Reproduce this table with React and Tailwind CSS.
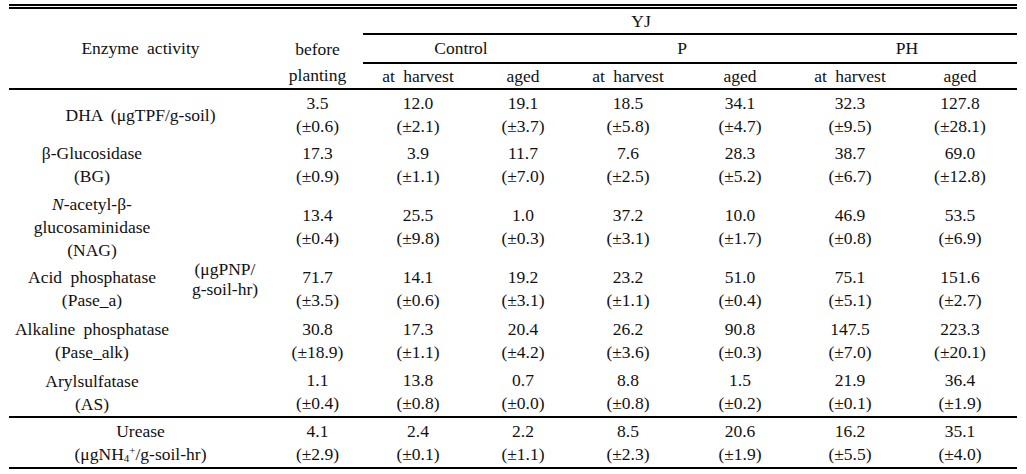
import React from "react";

const COLS = "grid-cols-[166px_97px_91px_110px_100px_110px_114px_106px_114px]";

const rows = [
  { key: "DHA", vals: [["3.5","±0.6"],["12.0","±2.1"],["19.1","±3.7"],["18.5","±5.8"],["34.1","±4.7"],["32.3","±9.5"],["127.8","±28.1"]] },
  { key: "BG", vals: [["17.3","±0.9"],["3.9","±1.1"],["11.7","±7.0"],["7.6","±2.5"],["28.3","±5.2"],["38.7","±6.7"],["69.0","±12.8"]] },
  { key: "NAG", vals: [["13.4","±0.4"],["25.5","±9.8"],["1.0","±0.3"],["37.2","±3.1"],["10.0","±1.7"],["46.9","±0.8"],["53.5","±6.9"]] },
  { key: "ACID", vals: [["71.7","±3.5"],["14.1","±0.6"],["19.2","±3.1"],["23.2","±1.1"],["51.0","±0.4"],["75.1","±5.1"],["151.6","±2.7"]] },
  { key: "ALK", vals: [["30.8","±18.9"],["17.3","±1.1"],["20.4","±4.2"],["26.2","±3.6"],["90.8","±0.3"],["147.5","±7.0"],["223.3","±20.1"]] },
  { key: "AS", vals: [["1.1","±0.4"],["13.8","±0.8"],["0.7","±0.0"],["8.8","±0.8"],["1.5","±0.2"],["21.9","±0.1"],["36.4","±1.9"]] },
];
const urease = [["4.1","±2.9"],["2.4","±0.1"],["2.2","±1.1"],["8.5","±2.3"],["20.6","±1.9"],["16.2","±5.5"],["35.1","±4.0"]];

function Val({ v }) {
  return (
    <div className="flex flex-col items-center justify-center leading-[23px]">
      <span>{v[0]}</span>
      <span>({v[1]})</span>
    </div>
  );
}

function Label({ children, className = "" }) {
  return (
    <div className={"flex flex-col items-center justify-center text-center leading-[23px] " + className}>
      {children}
    </div>
  );
}

export default function App() {
  return (
    <div className="w-[1026px] h-[474px] bg-white text-[#111] [font-family:'Liberation_Serif','Times_New_Roman',serif] text-[17.5px] [word-spacing:4px] pt-[4px] pl-[9px]">
      <div className="w-[1008px]">
        <div className="h-[2px] bg-black" />
        <div className="h-[1px]" />
        <div className="h-[1.5px] bg-black" />
        {/* Header */}
        <div className={"grid " + COLS + " grid-rows-[26px_29px_24px] pt-[0.5px]"}>
          <div className="col-span-2 row-span-3 flex items-center justify-center">Enzyme activity</div>
          <div className="row-span-3 flex flex-col items-center justify-end leading-[26px]">
            <span>before</span>
            <span>planting</span>
          </div>
          <div className="col-span-6 border-b-2 border-black flex items-center justify-center pr-[98px]">YJ</div>
          <div className="col-span-2 border-b-2 border-black flex items-center justify-center pr-[14px]">Control</div>
          <div className="col-span-2 border-b-2 border-black flex items-center justify-center pr-[6px]">P</div>
          <div className="col-span-2 border-b-2 border-black flex items-center justify-center">PH</div>
          <div className="flex items-center justify-center">at harvest</div>
          <div className="flex items-center justify-center">aged</div>
          <div className="flex items-center justify-center">at harvest</div>
          <div className="flex items-center justify-center">aged</div>
          <div className="flex items-center justify-center">at harvest</div>
          <div className="flex items-center justify-center">aged</div>
        </div>
        <div className="h-[2px] bg-black" />
        {/* Body */}
        <div className={"grid " + COLS + " grid-rows-[50px_50px_74px_50px_54px_48px]"}>
          <Label className="col-span-2">DHA (μgTPF/g-soil)</Label>
          {rows[0].vals.map((v, i) => <Val key={i} v={v} />)}

          <Label>
            <span>β-Glucosidase</span>
            <span>(BG)</span>
          </Label>
          <div />
          {rows[1].vals.map((v, i) => <Val key={i} v={v} />)}

          <Label className="leading-[22.5px]">
            <span><i>N</i>-acetyl-β-</span>
            <span>glucosaminidase</span>
            <span>(NAG)</span>
          </Label>
          <div className="row-span-3 flex flex-col items-center justify-center leading-[20px] pl-[3px]">
            <span>(μgPNP/</span>
            <span>g-soil-hr)</span>
          </div>
          {rows[2].vals.map((v, i) => <Val key={i} v={v} />)}

          <Label>
            <span>Acid phosphatase</span>
            <span>(Pase_a)</span>
          </Label>
          {rows[3].vals.map((v, i) => <Val key={i} v={v} />)}

          <Label>
            <span>Alkaline phosphatase</span>
            <span>(Pase_alk)</span>
          </Label>
          {rows[4].vals.map((v, i) => <Val key={i} v={v} />)}

          <Label className="pt-[2px]">
            <span>Arylsulfatase</span>
            <span>(AS)</span>
          </Label>
          <div />
          {rows[5].vals.map((v, i) => <Val key={i} v={v} />)}
        </div>
        <div className="h-[2px] bg-black" />
        <div className={"grid " + COLS + " h-[49px]"}>
          <Label className="col-span-2">
            <span>Urease</span>
            <span>
              (μgNH<sub className="text-[11px]">4</sub><sup className="text-[11px]">+</sup>/g-soil-hr)
            </span>
          </Label>
          {urease.map((v, i) => <Val key={i} v={v} />)}
        </div>
        <div className="h-[2px] bg-black" />
      </div>
    </div>
  );
}
